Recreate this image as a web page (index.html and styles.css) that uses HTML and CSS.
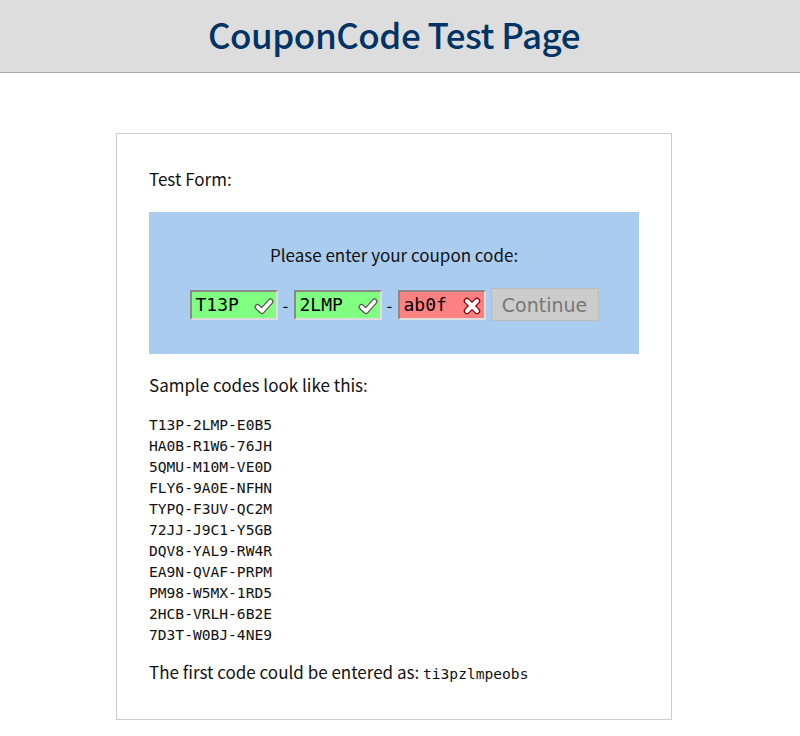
FILE: index.html
```html
<!DOCTYPE html>
<html>
<head>
<meta charset="utf-8">
<link rel="stylesheet" href="styles.css">
</head>
<body>
<header class="top"><h1 class="title">CouponCode Test Page</h1></header>
<main class="card">
  <p class="label">Test Form:</p>
  <div class="form">
    <p class="prompt">Please enter your coupon code:</p>
    <div class="row">
      <span class="field ok"><span class="val">T13P</span><svg class="ic" viewBox="0 0 20 20"><path d="M3.5 11 L8 15 L16.5 5.5" fill="none" stroke="#555" stroke-width="6" stroke-linecap="round" stroke-linejoin="round"/><path d="M3.5 11 L8 15 L16.5 5.5" fill="none" stroke="#fff" stroke-width="3.6" stroke-linecap="round" stroke-linejoin="round"/></svg></span>
      <span class="dash">-</span>
      <span class="field ok"><span class="val">2LMP</span><svg class="ic" viewBox="0 0 20 20"><path d="M3.5 11 L8 15 L16.5 5.5" fill="none" stroke="#555" stroke-width="6" stroke-linecap="round" stroke-linejoin="round"/><path d="M3.5 11 L8 15 L16.5 5.5" fill="none" stroke="#fff" stroke-width="3.6" stroke-linecap="round" stroke-linejoin="round"/></svg></span>
      <span class="dash">-</span>
      <span class="field bad"><span class="val">ab0f</span><svg class="ic" viewBox="0 0 20 20"><path d="M5 5 L15 15 M15 5 L5 15" fill="none" stroke="#800" stroke-width="6.5" stroke-linecap="round"/><path d="M5 5 L15 15 M15 5 L5 15" fill="none" stroke="#fff" stroke-width="4" stroke-linecap="round"/></svg></span>
      <button class="btn" disabled>Continue</button>
    </div>
  </div>
  <p class="label samples">Sample codes look like this:</p>
  <pre class="codes">T13P-2LMP-E0B5
HA0B-R1W6-76JH
5QMU-M10M-VE0D
FLY6-9A0E-NFHN
TYPQ-F3UV-QC2M
72JJ-J9C1-Y5GB
DQV8-YAL9-RW4R
EA9N-QVAF-PRPM
PM98-W5MX-1RD5
2HCB-VRLH-6B2E
7D3T-W0BJ-4NE9</pre>
  <p class="label last">The first code could be entered as: <code class="mono">ti3pzlmpeobs</code></p>
</main>
</body>
</html>
```
FILE: styles.css
```css
html, body { margin: 0; padding: 0; background: #fff; }
body { font-family: "Noto Sans CJK JP", "Noto Sans", sans-serif; color: #111; }
.top { background: #dddddd; border-bottom: 1px solid #aaaaaa; padding: 0 12px 6px 0; box-sizing: border-box; height: 73px; display: flex; align-items: center; justify-content: center; }
.title { margin: 0; font-size: 35px; font-weight: 500; color: #003366; letter-spacing: -0.5px; }
.card { width: 490px; margin: 60px 0 16px 116px; border: 1px solid #cccccc; padding: 24px 32px 24px; }
.label { margin: 0; font-size: 17px; line-height: 42px; }
.form { background: #aaccee; margin-top: 12px; padding: 26px 0 33px; display: flex; flex-direction: column; align-items: center; }
.prompt { margin: 0 0 16px; font-size: 17px; line-height: 34px; }
.row { display: flex; align-items: center; }
.field { display: flex; align-items: center; width: 78px; height: 26px; border: 2px solid; border-color: #8a8a8a #dddddd #dddddd #8a8a8a; padding: 0 2px 0 4px; font-family: "DejaVu Sans Mono", monospace; font-size: 18px; color: #000; }
.field.ok { background: #80ff80; }
.field.bad { background: #ff8080; }
.val { flex: 1; }
.ic { width: 20px; height: 20px; margin-top: 3px; }
.dash { width: 16px; text-align: center; font-size: 17px; }
.btn { margin-left: 5px; height: 33px; width: 108px; background: #cccccc; border: 1px solid #bbbbbb; color: #777; font-family: "DejaVu Sans", sans-serif; font-size: 19px; padding: 0; }
.samples { margin-top: 10px; }
.codes { margin: 8px 0 0; font-family: "DejaVu Sans Mono", monospace; font-size: 14.6px; line-height: 21px; color: #111; }
.last { margin-top: 6px; }
.mono { font-family: "DejaVu Sans Mono", monospace; font-size: 14.6px; }
```
